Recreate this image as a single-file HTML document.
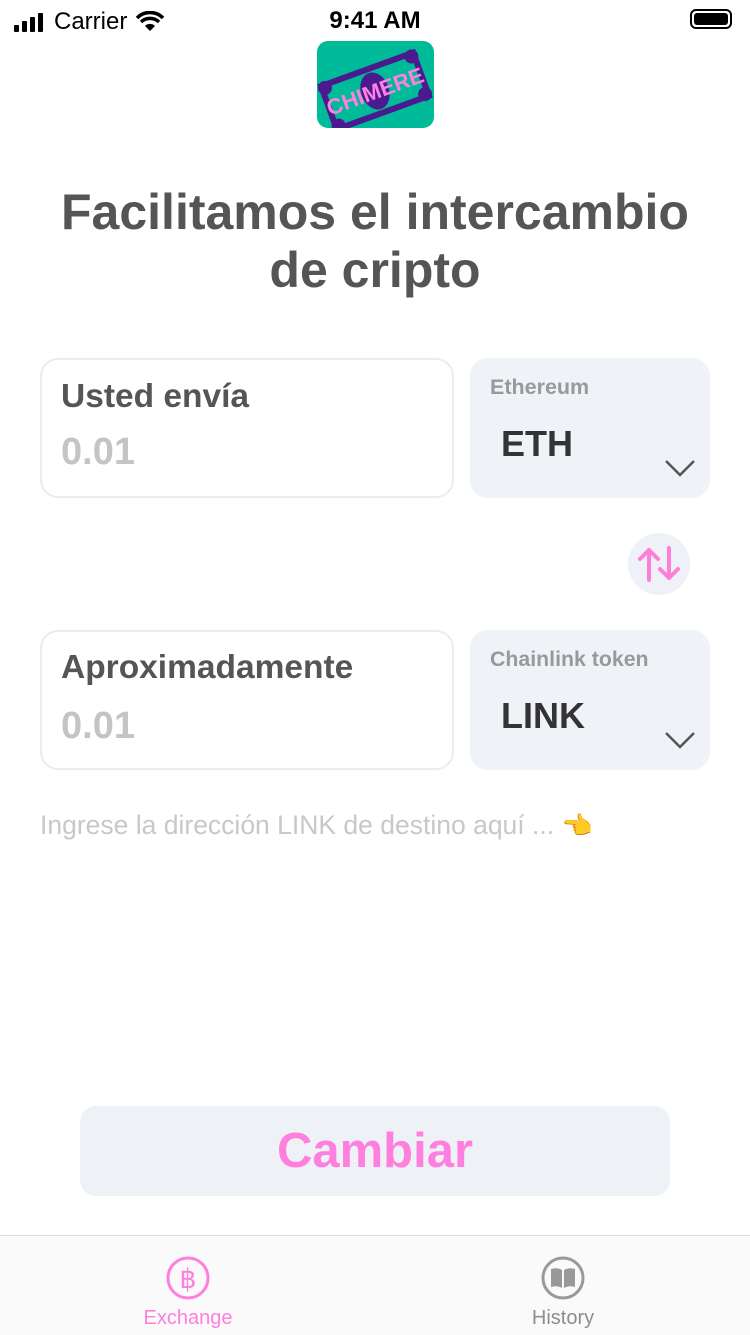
<!DOCTYPE html><html><head><meta charset="utf-8"><style>
body{margin:0;width:750px;height:1334px;position:relative;background:#fff;font-family:"Liberation Sans",sans-serif;overflow:hidden}
.a{position:absolute}
.box{position:absolute;border:2px solid #ececec;border-radius:18px;box-sizing:border-box}
.sel{position:absolute;background:#eff2f7;border-radius:18px}
.lbl{font-weight:bold;color:#555;font-size:33.5px}
.val{font-weight:bold;color:#c4c4c4;font-size:38px}
</style></head><body>
<div class="a" style="left:14px;top:8px;font-size:24px;color:#000;display:flex;align-items:center">
<svg width="34" height="20"><rect x="0" y="13" width="5" height="7" rx="1"/><rect x="8" y="9" width="5" height="11" rx="1"/><rect x="16" y="5" width="5" height="15" rx="1"/><rect x="24" y="1" width="5" height="19" rx="1"/></svg>
<span style="margin-left:6px">Carrier</span>
<svg width="30" height="22" style="margin-left:8px" viewBox="0 0 30 22"><path d="M15 20 L10 15 A7 7 0 0 1 20 15Z"/><path d="M6 11 A13 13 0 0 1 24 11" stroke="#000" stroke-width="3.5" fill="none"/><path d="M2 7 A18 18 0 0 1 28 7" stroke="#000" stroke-width="3.5" fill="none"/></svg></div>
<div class="a" style="left:0;width:750px;top:7px;text-align:center;font-size:24px;font-weight:bold">9:41 AM</div>
<div class="a" style="left:690px;top:9px;width:42px;height:20px;border:2px solid #000;border-radius:6px;box-sizing:border-box;padding:2px"><div style="background:#000;height:100%;border-radius:3px"></div></div>
<svg class="a" style="left:317px;top:41px" width="117" height="87" viewBox="0 0 117 87">
<rect width="117" height="87" rx="11" fill="#00bb9a"/>
<g transform="rotate(-20 58 50)"><rect x="6" y="24" width="104" height="52" fill="#4a1a8e"/><rect x="12" y="30" width="92" height="40" fill="#00bb9a"/><ellipse cx="58" cy="50" rx="14" ry="19" fill="#4a1a8e"/><circle cx="12" cy="30" r="7" fill="#4a1a8e"/><circle cx="104" cy="30" r="7" fill="#4a1a8e"/><circle cx="12" cy="70" r="7" fill="#4a1a8e"/><circle cx="104" cy="70" r="7" fill="#4a1a8e"/>
<text x="58" y="58" text-anchor="middle" font-family="Liberation Sans" font-weight="bold" font-size="22" fill="#ff80e0">CHIMERE</text></g></svg>
<div class="a" style="left:0;width:750px;top:183px;text-align:center;font-size:50px;font-weight:bold;color:#555;line-height:58px">Facilitamos el intercambio<br>de cripto</div>

<div class="box" style="left:40px;top:358px;width:414px;height:140px"></div>
<div class="a lbl" style="left:61px;top:378px">Usted envía</div>
<div class="a val" style="left:61px;top:431px">0.01</div>
<div class="sel" style="left:470px;top:358px;width:240px;height:140px"></div>
<div class="a" style="left:490px;top:375px;font-size:21.5px;font-weight:bold;color:#999">Ethereum</div>
<div class="a" style="left:501px;top:423px;font-size:36px;font-weight:bold;color:#333">ETH</div>
<svg class="a" style="left:664px;top:458px" width="32" height="20"><path d="M2 3 L16 17 L30 3" stroke="#555" stroke-width="2.5" fill="none"/></svg>

<div class="a" style="left:628px;top:533px;width:62px;height:62px;border-radius:50%;background:#eef1f7"></div>
<svg class="a" style="left:628px;top:533px" width="62" height="62"><g stroke="#ff7fd8" stroke-width="4" fill="none" stroke-linecap="round" stroke-linejoin="round"><path d="M21 47 V17 M12 26 L21 17 L30 26"/><path d="M41 15 V45 M32 36 L41 45 L50 36"/></g></svg>

<div class="box" style="left:40px;top:630px;width:414px;height:140px"></div>
<div class="a lbl" style="left:61px;top:649px">Aproximadamente</div>
<div class="a val" style="left:61px;top:705px">0.01</div>
<div class="sel" style="left:470px;top:630px;width:240px;height:140px"></div>
<div class="a" style="left:490px;top:647px;font-size:21.3px;font-weight:bold;color:#999">Chainlink token</div>
<div class="a" style="left:501px;top:695px;font-size:36px;font-weight:bold;color:#333">LINK</div>
<svg class="a" style="left:664px;top:730px" width="32" height="20"><path d="M2 3 L16 17 L30 3" stroke="#555" stroke-width="2.5" fill="none"/></svg>

<div class="a" style="left:40px;top:810px;font-size:26.5px;color:#c8c8c8">Ingrese la dirección LINK de destino aquí ... <span style="color:#f5b820;font-size:25px">👈</span></div>

<div class="a" style="left:80px;top:1106px;width:590px;height:90px;background:#eef1f6;border-radius:16px;text-align:center;line-height:90px;font-size:49px;font-weight:bold;color:#ff7fde">Cambiar</div>

<div class="a" style="left:0;top:1235px;width:750px;height:99px;background:#fafafa;border-top:1px solid #ddd"></div>
<svg class="a" style="left:166px;top:1256px" width="44" height="44"><circle cx="22" cy="22" r="20" stroke="#ff7fde" stroke-width="3" fill="none"/><text x="22" y="32" text-anchor="middle" font-family="Liberation Sans" font-size="27" fill="#ff7fde">฿</text></svg>
<div class="a" style="left:128px;width:120px;top:1307px;text-align:center;font-size:20px;color:#ff7fde">Exchange</div>
<svg class="a" style="left:541px;top:1256px" width="44" height="44"><circle cx="22" cy="22" r="20" stroke="#999" stroke-width="3" fill="none"/><path d="M10 13 Q16 11 21 14 V32 Q16 29 10 31Z M23 14 Q28 11 34 13 V31 Q28 29 23 32Z" fill="#999"/></svg>
<div class="a" style="left:503px;width:120px;top:1307px;text-align:center;font-size:20px;color:#8e8e8e">History</div>
</body></html>
